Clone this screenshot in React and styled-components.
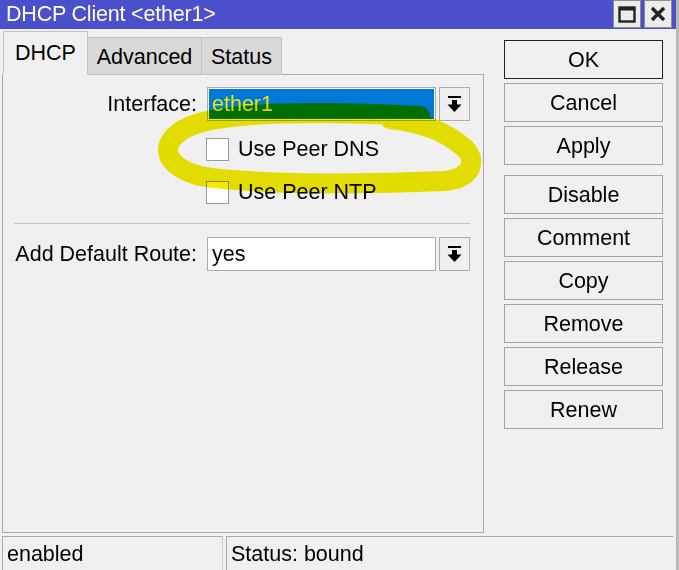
import React from 'react';
import styled, { createGlobalStyle } from 'styled-components';

const GlobalStyle = createGlobalStyle`
  html, body {
    margin: 0;
    padding: 0;
    background: #f0f0f0;
  }
  body {
    font-family: 'Liberation Sans', Arial, sans-serif;
    color: #000;
  }
`;

const Window = styled.div`
  position: relative;
  width: 679px;
  height: 570px;
  overflow: hidden;
  background: #f0f0f0;
  display: flex;
  flex-direction: column;
  box-sizing: border-box;
  border-right: 3px solid #b9b9b9;
`;

const TitleBar = styled.div`
  height: 29px;
  flex: none;
  background: #4c4fcb;
  display: flex;
  align-items: center;
  padding-left: 6px;
  box-sizing: border-box;
`;

const TitleText = styled.div`
  flex: 1;
  color: #fff;
  font-size: 21.5px;
  letter-spacing: -0.2px;
  line-height: 29px;
`;

const WinButtons = styled.div`
  display: flex;
  gap: 3px;
  align-self: flex-start;
  margin-right: 4px;
`;

const WinButton = styled.div`
  width: 28px;
  height: 28px;
  background: #ececec;
  border: 1px solid #8d8d8d;
  box-sizing: border-box;
  display: flex;
  align-items: center;
  justify-content: center;
`;

const Body = styled.div`
  flex: 1;
  display: flex;
  min-height: 0;
`;

const LeftCol = styled.div`
  width: 482px;
  margin-left: 2px;
  display: flex;
  flex-direction: column;
`;

const Tabs = styled.div`
  height: 46px;
  display: flex;
  align-items: flex-end;
  padding-left: 1px;
  margin-bottom: -1px;
  position: relative;
  z-index: 1;
`;

const Tab = styled.div`
  box-sizing: border-box;
  width: ${p => p.$w}px;
  height: ${p => (p.$active ? 44 : 38)}px;
  background: ${p => (p.$active ? '#f0f0f0' : '#d9d9d9')};
  border: 1px solid #c4c4c4;
  border-bottom: ${p => (p.$active ? '1px solid #f0f0f0' : '1px solid #c4c4c4')};
  border-left: ${p => (p.$first ? '1px solid #c4c4c4' : 'none')};
  font-size: 21.5px;
  display: flex;
  align-items: ${p => (p.$active ? 'flex-start' : 'center')};
  justify-content: center;
  padding-top: ${p => (p.$active ? 9 : 2)}px;
`;

const Panel = styled.div`
  height: 459px;
  box-sizing: border-box;
  border: 1px solid #a9a9a9;
  padding: 12px 0 0 11px;
`;

const Grid = styled.div`
  display: grid;
  grid-template-columns: 183px 239px 34px;
  align-items: center;
`;

const Label = styled.div`
  font-size: 21.5px;
  text-align: right;
  white-space: nowrap;
`;

const Field = styled.div`
  margin-left: 10px;
  height: 34px;
  box-sizing: border-box;
  border: 1px solid #acacac;
  background: ${p => (p.$selected ? '#0078d7' : '#fff')};
  box-shadow: ${p => (p.$selected ? 'inset 0 0 0 1px #fff' : 'none')};
  color: ${p => (p.$selected ? '#e6e800' : '#000')};
  font-size: 21.5px;
  display: flex;
  align-items: center;
  padding-left: 4px;
`;

const DropButton = styled.div`
  margin-left: 3px;
  width: 31px;
  height: 34px;
  box-sizing: border-box;
  border: 1px solid #acacac;
  background: #efefef;
  display: flex;
  align-items: center;
  justify-content: center;
`;

const CheckRow = styled.div`
  grid-column: 2 / 4;
  margin-left: 9px;
  display: flex;
  align-items: center;
  gap: 9px;
  font-size: 21.5px;
  height: 23px;
  margin-top: ${p => p.$top}px;
`;

const Box = styled.div`
  width: 23px;
  height: 23px;
  box-sizing: border-box;
  border: 1px solid #9a9a9a;
  background: #fff;
`;

const Separator = styled.div`
  grid-column: 1 / 4;
  height: 1px;
  background: #c6c6c6;
  margin: 19px 0 13px 0;
`;

const RightCol = styled.div`
  margin-left: 20px;
  padding-top: 11px;
  display: flex;
  flex-direction: column;
  gap: 4px;
`;

const Button = styled.div`
  width: 159px;
  height: 39px;
  box-sizing: border-box;
  border: 1px solid ${p => (p.$default ? '#222' : '#a3a3a3')};
  background: #f0f0f0;
  font-size: 21.5px;
  display: flex;
  align-items: center;
  justify-content: center;
  padding-top: 2px;
  margin-top: ${p => (p.$spaced ? 6 : 0)}px;
`;

const StatusBar = styled.div`
  height: 34px;
  flex: none;
  margin-top: 3px;
  display: flex;
  gap: 3px;
  padding-left: 2px;
`;

const StatusCell = styled.div`
  box-sizing: border-box;
  width: ${p => p.$w}px;
  border-top: 1px solid #a9a9a9;
  border-left: 1px solid #a9a9a9;
  border-right: ${p => (p.$last ? 'none' : '1px solid #d0d0d0')};
  font-size: 21.5px;
  padding: 5px 0 0 4px;
  white-space: nowrap;
`;

const Highlight = styled.svg`
  position: absolute;
  left: 0;
  top: 0;
  pointer-events: none;
  mix-blend-mode: multiply;
`;

const DropIcon = () => (
  <svg width="15" height="17" viewBox="0 0 15 17">
    <rect x="1" y="0" width="13" height="2" fill="#000" />
    <rect x="5" y="4" width="5" height="5" fill="#000" />
    <path d="M0.5 8.5 L14.5 8.5 L7.5 16 Z" fill="#000" />
  </svg>
);

const buttons = ['OK', 'Cancel', 'Apply', 'Disable', 'Comment', 'Copy', 'Remove', 'Release', 'Renew'];

export default function App() {
  return (
    <>
      <GlobalStyle />
      <Window>
        <TitleBar>
          <TitleText>DHCP Client &lt;ether1&gt;</TitleText>
          <WinButtons>
            <WinButton>
              <svg width="18" height="17" viewBox="0 0 18 17">
                <rect x="1.5" y="1.5" width="15" height="14" fill="none" stroke="#222" strokeWidth="2.4" />
                <rect x="1.5" y="1.5" width="15" height="3" fill="#222" />
              </svg>
            </WinButton>
            <WinButton>
              <svg width="16" height="16" viewBox="0 0 16 16">
                <path d="M2 2 L14 14 M14 2 L2 14" stroke="#222" strokeWidth="3.4" />
              </svg>
            </WinButton>
          </WinButtons>
        </TitleBar>
        <Body>
          <LeftCol>
            <Tabs>
              <Tab $active $first $w={85}>DHCP</Tab>
              <Tab $w={114}>Advanced</Tab>
              <Tab $w={80}>Status</Tab>
            </Tabs>
            <Panel>
              <Grid>
                <Label>Interface:</Label>
                <Field $selected>ether1</Field>
                <DropButton><DropIcon /></DropButton>
                <CheckRow $top={17}><Box />Use Peer DNS</CheckRow>
                <CheckRow $top={20}><Box />Use Peer NTP</CheckRow>
                <Separator />
                <Label>Add Default Route:</Label>
                <Field>yes</Field>
                <DropButton><DropIcon /></DropButton>
              </Grid>
            </Panel>
          </LeftCol>
          <RightCol>
            {buttons.map(b => (
              <Button key={b} $default={b === 'OK'} $spaced={b === 'Disable'}>{b}</Button>
            ))}
          </RightCol>
        </Body>
        <StatusBar>
          <StatusCell $w={221}>enabled</StatusCell>
          <StatusCell $w={447} $last>Status: bound</StatusCell>
        </StatusBar>
        <Highlight width="679" height="570" viewBox="0 0 679 570">
          <path
            d="M420 116 C340 112, 240 110, 196 124 C160 136, 156 164, 200 176 C260 186, 380 184, 445 181 C474 178, 478 158, 462 146 C445 132, 425 123, 390 119"
            fill="none"
            stroke="#f2ea00"
            strokeWidth="20"
            strokeLinecap="round"
          />
        </Highlight>
      </Window>
    </>
  );
}
